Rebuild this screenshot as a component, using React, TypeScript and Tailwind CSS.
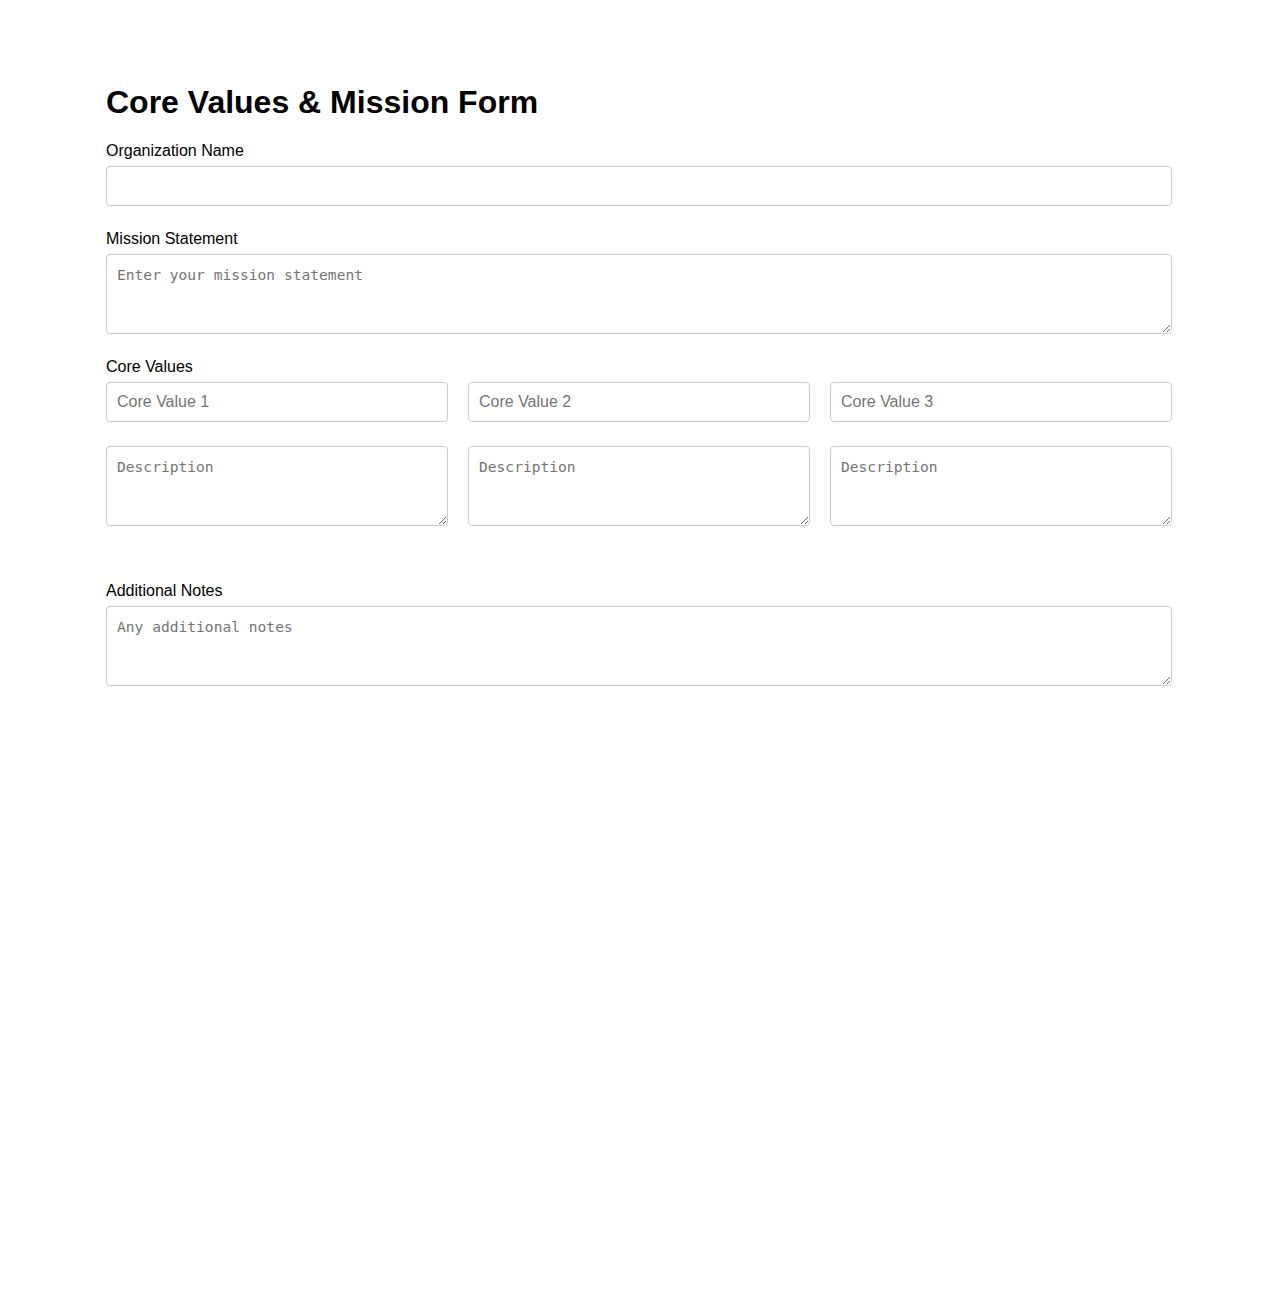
import React, { useState } from 'react';

const inputClass =
  "block w-full h-[40px] px-[10px] border border-[#cccccc] rounded-[4px] text-[16px] text-black placeholder:text-[#757575] outline-none";

const areaClass =
  "block w-full h-[80px] p-[10px] border border-[#cccccc] rounded-[4px] text-[14.6px] leading-[19px] text-black placeholder:text-[#757575] outline-none font-['DejaVu_Sans_Mono',monospace]";

const labelClass = "block text-[16px] leading-[18px] text-black mb-[6px]";

interface CoreValue {
  name: string;
  description: string;
}

const App: React.FC = () => {
  const [orgName, setOrgName] = useState<string>('');
  const [mission, setMission] = useState<string>('');
  const [values, setValues] = useState<CoreValue[]>([
    { name: '', description: '' },
    { name: '', description: '' },
    { name: '', description: '' },
  ]);
  const [notes, setNotes] = useState<string>('');

  const updateValue = (index: number, field: keyof CoreValue, value: string) => {
    setValues(prev => prev.map((v, i) => (i === index ? { ...v, [field]: value } : v)));
  };

  return (
    <div className="min-h-screen bg-white font-['Liberation_Sans',Arial,sans-serif]">
      <div className="w-[1066px] mx-auto pt-[84px]">
        <h1 className="text-[32px] leading-[37px] font-bold text-black mb-[21px]">
          Core Values &amp; Mission Form
        </h1>

        {/* Organization */}
        <div className="mb-[24px]">
          <label className={labelClass}>Organization Name</label>
          <input
            type="text"
            value={orgName}
            onChange={e => setOrgName(e.target.value)}
            className={inputClass}
          />
        </div>

        {/* Mission */}
        <div className="mb-[24px]">
          <label className={labelClass}>Mission Statement</label>
          <textarea
            placeholder="Enter your mission statement"
            value={mission}
            onChange={e => setMission(e.target.value)}
            className={areaClass}
          />
        </div>

        {/* Core values */}
        <div className="mb-[56px]">
          <label className={labelClass}>Core Values</label>
          <div className="grid grid-cols-3 gap-x-[20px] gap-y-[24px]">
            {values.map((v, i) => (
              <input
                key={`name-${i}`}
                type="text"
                placeholder={`Core Value ${i + 1}`}
                value={v.name}
                onChange={e => updateValue(i, 'name', e.target.value)}
                className={inputClass}
              />
            ))}
            {values.map((v, i) => (
              <textarea
                key={`desc-${i}`}
                placeholder="Description"
                value={v.description}
                onChange={e => updateValue(i, 'description', e.target.value)}
                className={areaClass}
              />
            ))}
          </div>
        </div>

        {/* Notes */}
        <div>
          <label className={labelClass}>Additional Notes</label>
          <textarea
            placeholder="Any additional notes"
            value={notes}
            onChange={e => setNotes(e.target.value)}
            className={areaClass}
          />
        </div>
      </div>
    </div>
  );
};

export default App;
